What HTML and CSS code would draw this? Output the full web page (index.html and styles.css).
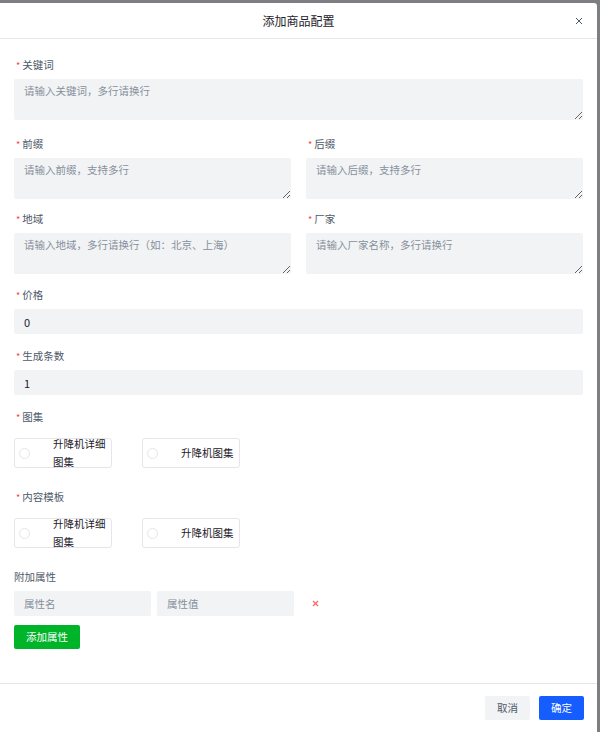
FILE: index.html
```html
<!DOCTYPE html>
<html lang="zh">
<head>
<meta charset="utf-8">
<title>添加商品配置</title>
<link rel="stylesheet" href="styles.css">
</head>
<body>
<div class="modal">
  <div class="modal-header">
    <span class="modal-title">添加商品配置</span>
    <span class="modal-close">
      <svg width="8" height="8" viewBox="0 0 8 8"><path d="M1 1L7 7M7 1L1 7" stroke="#4e5969" stroke-width="1" fill="none"/></svg>
    </span>
  </div>
  <div class="modal-body">
    <div class="form-item first">
      <div class="label"><span class="req">*</span>关键词</div>
      <textarea class="textarea" placeholder="请输入关键词，多行请换行"></textarea>
    </div>
    <div class="row row-a">
      <div class="form-item">
        <div class="label"><span class="req">*</span>前缀</div>
        <textarea class="textarea" placeholder="请输入前缀，支持多行"></textarea>
      </div>
      <div class="form-item">
        <div class="label"><span class="req">*</span>后缀</div>
        <textarea class="textarea" placeholder="请输入后缀，支持多行"></textarea>
      </div>
    </div>
    <div class="row row-b">
      <div class="form-item">
        <div class="label"><span class="req">*</span>地域</div>
        <textarea class="textarea" placeholder="请输入地域，多行请换行（如：北京、上海）"></textarea>
      </div>
      <div class="form-item">
        <div class="label"><span class="req">*</span>厂家</div>
        <textarea class="textarea" placeholder="请输入厂家名称，多行请换行"></textarea>
      </div>
    </div>
    <div class="form-item">
      <div class="label"><span class="req">*</span>价格</div>
      <input class="input" type="text" value="0">
    </div>
    <div class="form-item">
      <div class="label"><span class="req">*</span>生成条数</div>
      <input class="input" type="text" value="1">
    </div>
    <div class="form-item">
      <div class="label"><span class="req">*</span>图集</div>
      <div class="choice-group">
        <label class="choice"><span class="radio"></span><span class="choice-text">升降机详细图集</span></label>
        <label class="choice"><span class="radio"></span><span class="choice-text">升降机图集</span></label>
      </div>
    </div>
    <div class="form-item">
      <div class="label"><span class="req">*</span>内容模板</div>
      <div class="choice-group">
        <label class="choice"><span class="radio"></span><span class="choice-text">升降机详细图集</span></label>
        <label class="choice"><span class="radio"></span><span class="choice-text">升降机图集</span></label>
      </div>
    </div>
    <div class="form-item attrs">
      <div class="label">附加属性</div>
      <div class="attr-row">
        <input class="input attr-input" type="text" placeholder="属性名">
        <input class="input attr-input" type="text" placeholder="属性值">
        <span class="attr-del">
          <svg width="7" height="7" viewBox="0 0 7 7"><path d="M1 1L6 6M6 1L1 6" stroke="#f76965" stroke-width="1.3" fill="none"/></svg>
        </span>
      </div>
      <button class="btn btn-green">添加属性</button>
    </div>
  </div>
  <div class="modal-footer">
    <button class="btn btn-gray">取消</button>
    <button class="btn btn-blue">确定</button>
  </div>
</div>
</body>
</html>
```
FILE: styles.css
```css
* { box-sizing: border-box; }
html, body {
  margin: 0;
  padding: 0;
  height: 100%;
}
body {
  background: #7c7e81;
  font-family: "Noto Sans CJK SC", "Noto Sans", sans-serif;
  font-size: 10.5px;
  color: #1d2129;
  overflow: hidden;
}
.modal {
  margin-top: 3px;
  width: 597px;
  height: 729px;
  background: #fff;
  border-top-right-radius: 3px;
  display: flex;
  flex-direction: column;
}
.modal-header {
  height: 36px;
  border-bottom: 1px solid #e5e6eb;
  display: flex;
  align-items: center;
  justify-content: center;
  position: relative;
}
.modal-title {
  font-size: 12px;
  color: #1d2129;
  line-height: 16px;
}
.modal-close {
  position: absolute;
  right: 14px;
  top: 14px;
  width: 8px;
  height: 8px;
  display: flex;
}
.modal-body {
  flex: 1;
  padding: 19px 14px 0 14px;
}
.row {
  display: grid;
  grid-template-columns: 1fr 1fr;
  column-gap: 15px;
}
.form-item {
  margin-bottom: 15px;
}
.form-item.first {
  margin-bottom: 17px;
}
.row-a .form-item {
  margin-bottom: 13px;
}
.row-b .form-item {
  margin-bottom: 14px;
}
.label {
  line-height: 14px;
  height: 14px;
  margin-bottom: 7px;
  color: #4e5969;
  padding-left: 2px;
  display: flex;
  align-items: center;
}
.req {
  color: #f53f3f;
  font-size: 9px;
  margin-right: 2px;
  position: relative;
  top: 1px;
}
.textarea {
  display: block;
  width: 100%;
  height: 41px;
  border: none;
  border-radius: 2px;
  background: #f2f3f5;
  padding: 4px 10px;
  font-family: inherit;
  font-size: 10.5px;
  line-height: 16px;
  color: #1d2129;
  outline: none;
}
.textarea::placeholder, .input::placeholder {
  color: #86909c;
}
.input {
  display: block;
  width: 100%;
  height: 25px;
  border: none;
  border-radius: 2px;
  background: #f2f3f5;
  padding: 0 10px;
  font-family: inherit;
  font-size: 11px;
  color: #1d2129;
  outline: none;
}
.choice-group {
  display: flex;
  padding: 7px 0 7px 0;
}
.choice {
  width: 98px;
  height: 30px;
  border: 1px solid #e5e6eb;
  border-radius: 3px;
  display: flex;
  align-items: center;
  margin-right: 30px;
}
.radio {
  width: 11px;
  height: 11px;
  border: 1px solid #e5e6eb;
  border-radius: 50%;
  margin-left: 4px;
  flex: none;
}
.choice-text {
  margin-left: 23px;
  width: 57px;
  line-height: 18px;
  color: #1d2129;
  font-size: 10.5px;
  flex: none;
}
.attrs .label {
  padding-left: 0;
}
.attr-row {
  display: flex;
  align-items: center;
  gap: 6px;
  margin-bottom: 9px;
}
.attr-input {
  width: 137px;
  font-size: 10.5px;
}
.attr-del {
  margin-left: 12px;
  display: flex;
}
.btn {
  height: 24px;
  border: none;
  border-radius: 2px;
  padding: 0 12px;
  font-family: inherit;
  font-size: 10.5px;
  line-height: 24px;
  cursor: pointer;
}
.btn-green {
  background: #00b42a;
  color: #fff;
}
.btn-gray {
  background: #f2f3f5;
  color: #4e5969;
}
.btn-blue {
  background: #165dff;
  color: #fff;
}
.modal-footer {
  border-top: 1px solid #e5e6eb;
  height: 49px;
  padding: 12px 13px 0 0;
  display: flex;
  justify-content: flex-end;
  align-items: flex-start;
  gap: 9px;
}
```
